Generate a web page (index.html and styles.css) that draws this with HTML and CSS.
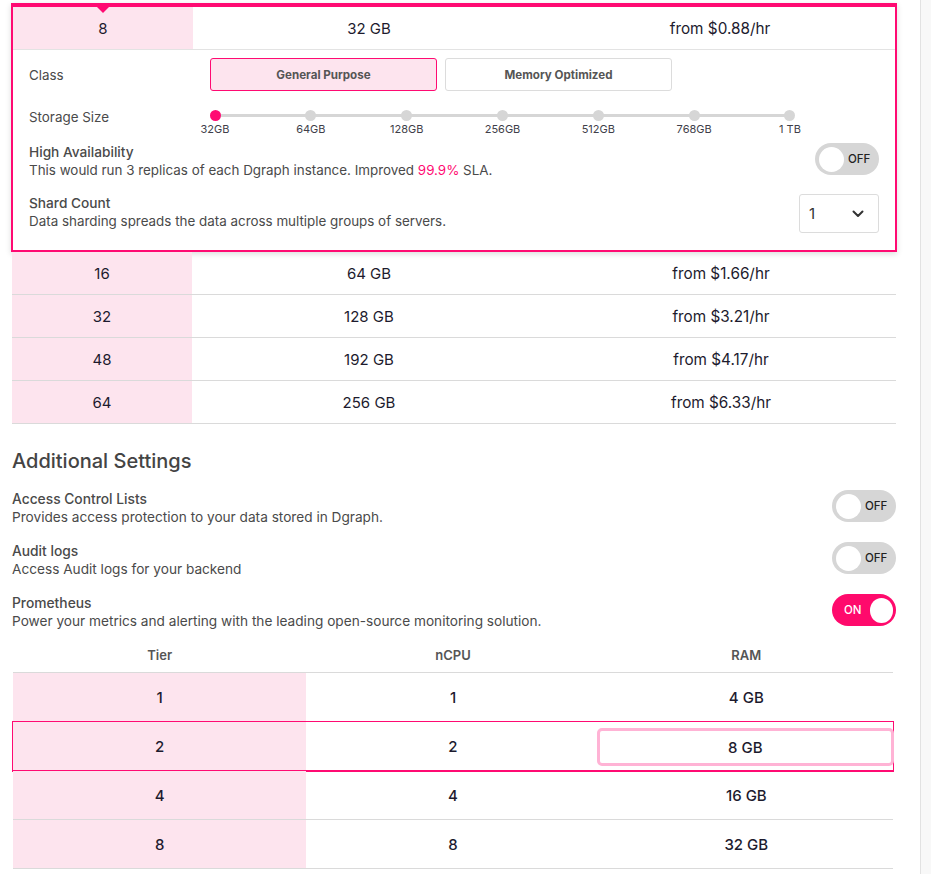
FILE: index.html
```html
<!DOCTYPE html>
<html>
<head>
<meta charset="utf-8">
<title>Dgraph backend config</title>
<link rel="stylesheet" href="styles.css">
</head>
<body>
<div class="page">
  <div class="content">
    <div class="card">
      <div class="card-row">
        <div class="cell pink"><span class="marker"></span>8</div>
        <div class="cell">32 GB</div>
        <div class="cell price">from $0.88/hr</div>
      </div>
      <div class="config">
        <div class="cfg-class">
          <div class="label">Class</div>
          <div class="btns">
            <button class="btn active">General Purpose</button>
            <button class="btn">Memory Optimized</button>
          </div>
        </div>
        <div class="cfg-storage">
          <div class="label">Storage Size</div>
          <div class="slider">
            <div class="stop on"><span class="dot"></span><span class="stop-l">32GB</span></div>
            <div class="stop"><span class="dot"></span><span class="stop-l">64GB</span></div>
            <div class="stop"><span class="dot"></span><span class="stop-l">128GB</span></div>
            <div class="stop"><span class="dot"></span><span class="stop-l">256GB</span></div>
            <div class="stop"><span class="dot"></span><span class="stop-l">512GB</span></div>
            <div class="stop"><span class="dot"></span><span class="stop-l">768GB</span></div>
            <div class="stop"><span class="dot"></span><span class="stop-l">1 TB</span></div>
          </div>
        </div>
        <div class="opt ha">
          <div class="opt-text">
            <div class="opt-title">High Availability</div>
            <div class="opt-desc">This would run 3 replicas of each Dgraph instance. Improved <span class="hl">99.9%</span> SLA.</div>
          </div>
          <div class="toggle"><span class="knob"></span><span class="tl">OFF</span></div>
        </div>
        <div class="opt shard">
          <div class="opt-text">
            <div class="opt-title">Shard Count</div>
            <div class="opt-desc">Data sharding spreads the data across multiple groups of servers.</div>
          </div>
          <div class="select"><span class="sel-v">1</span>
            <svg class="chev" width="12" height="8" viewBox="0 0 12 8"><path d="M1.5 1.5 L6 6 L10.5 1.5" fill="none" stroke="#333" stroke-width="2" stroke-linecap="round" stroke-linejoin="round"/></svg>
          </div>
        </div>
      </div>
    </div>

    <div class="trow"><div class="cell pink">16</div><div class="cell">64 GB</div><div class="cell price">from $1.66/hr</div></div>
    <div class="trow"><div class="cell pink">32</div><div class="cell">128 GB</div><div class="cell price">from $3.21/hr</div></div>
    <div class="trow"><div class="cell pink">48</div><div class="cell">192 GB</div><div class="cell price">from $4.17/hr</div></div>
    <div class="trow"><div class="cell pink">64</div><div class="cell">256 GB</div><div class="cell price">from $6.33/hr</div></div>

    <h2 class="heading">Additional Settings</h2>

    <div class="settings">
      <div class="opt">
        <div class="opt-text">
          <div class="opt-title">Access Control Lists</div>
          <div class="opt-desc">Provides access protection to your data stored in Dgraph.</div>
        </div>
        <div class="toggle"><span class="knob"></span><span class="tl">OFF</span></div>
      </div>
      <div class="opt">
        <div class="opt-text">
          <div class="opt-title">Audit logs</div>
          <div class="opt-desc">Access Audit logs for your backend</div>
        </div>
        <div class="toggle"><span class="knob"></span><span class="tl">OFF</span></div>
      </div>
      <div class="opt">
        <div class="opt-text">
          <div class="opt-title">Prometheus</div>
          <div class="opt-desc">Power your metrics and alerting with the leading open-source monitoring solution.</div>
        </div>
        <div class="toggle on"><span class="tl">ON</span><span class="knob"></span></div>
      </div>
    </div>

    <div class="tiers">
      <div class="thead"><div class="hcell">Tier</div><div class="hcell">nCPU</div><div class="hcell">RAM</div></div>
      <div class="tier-row"><div class="tcell pink">1</div><div class="tcell">1</div><div class="tcell">4 GB</div></div>
      <div class="tier-row selected"><div class="tcell pink">2</div><div class="tcell">2</div><div class="tcell"><div class="focus">8 GB</div></div></div>
      <div class="tier-row"><div class="tcell pink">4</div><div class="tcell">4</div><div class="tcell">16 GB</div></div>
      <div class="tier-row"><div class="tcell pink">8</div><div class="tcell">8</div><div class="tcell">32 GB</div></div>
    </div>
  </div>
</div>
</body>
</html>
```

FILE: styles.css
```css
* { box-sizing: border-box; }

html, body {
  margin: 0;
  padding: 0;
}

body {
  background: #f8f8f8;
  font-family: Inter, "Noto Sans", "Liberation Sans", sans-serif;
  color: #1d1b2e;
}

.page {
  width: 921px;
  min-height: 874px;
  background: #fff;
  border-right: 1px solid #e2e2e2;
  padding-top: 3px;
}

.content {
  margin-left: 12px;
  width: 884px;
}

/* selected card */
.card {
  margin-left: -1px;
  width: 886px;
  border: 2px solid #ff0a72;
  border-top-width: 4px;
  background: #fff;
  box-shadow: 0 2px 6px rgba(0, 0, 0, 0.14);
}

.card-row {
  display: grid;
  grid-template-columns: 180px 352px 1fr;
  height: 43px;
  border-bottom: 1px solid #e3e3e3;
}

.cell {
  display: flex;
  align-items: center;
  justify-content: center;
  font-size: 15px;
  color: #1d1b2e;
  position: relative;
}

.price { font-size: 15.3px; }

.pink { background: #fde4ee; }

.marker {
  position: absolute;
  top: 0;
  left: 84px;
  width: 0;
  height: 0;
  border-left: 6px solid transparent;
  border-right: 6px solid transparent;
  border-top: 6px solid #ff0a72;
}

.config {
  padding: 8px 16px 17px 16px;
}

.label {
  width: 181px;
  font-size: 13.4px;
  color: #4a4a4a;
  line-height: 24px;
}

.cfg-class {
  display: flex;
  align-items: center;
  height: 33px;
}

.btns {
  display: flex;
  gap: 8px;
}

.btn {
  width: 227px;
  height: 33px;
  border: 1px solid #dcdcdc;
  border-radius: 3px;
  background: #fff;
  font-family: Inter, "Noto Sans", sans-serif;
  font-weight: 700;
  font-size: 11.6px;
  color: #555;
  padding: 0;
}

.btn.active {
  background: #fde4ee;
  border-color: #ff0a72;
}

.cfg-storage {
  display: flex;
  align-items: flex-start;
  margin-top: 14px;
  height: 31px;
}

.slider {
  position: relative;
  margin-left: -15px;
  width: 615px;
  display: flex;
  justify-content: space-between;
  padding-top: 5px;
}

.slider::before {
  content: "";
  position: absolute;
  left: 20px;
  right: 20px;
  top: 9px;
  height: 3px;
  background: #d6d6d6;
}

.stop {
  width: 40px;
  display: flex;
  flex-direction: column;
  align-items: center;
  position: relative;
}

.dot {
  width: 11px;
  height: 11px;
  border-radius: 50%;
  background: #d6d6d6;
}

.stop.on .dot { background: #ff0a72; }

.stop-l {
  margin-top: 1px;
  font-size: 11px;
  line-height: 14px;
  color: #3f3f4a;
  white-space: nowrap;
}

.opt {
  display: flex;
  justify-content: space-between;
  align-items: flex-start;
}

.ha { margin-top: 7px; }
.shard { margin-top: 15px; }

.opt-title {
  font-size: 13.7px;
  line-height: 18px;
  font-weight: 500;
  color: #4a4a4a;
}

.opt-desc {
  font-size: 13.4px;
  line-height: 18px;
  color: #4a4a4a;
}

.settings .opt-title { font-size: 13.8px; }
.settings .opt-desc { font-size: 13.65px; }

.hl { color: #ff0a72; }

.toggle {
  width: 64px;
  height: 32px;
  border-radius: 16px;
  background: #d6d6d6;
  display: flex;
  align-items: center;
  padding: 0 4px;
  gap: 4px;
  flex-shrink: 0;
}

.knob {
  width: 25px;
  height: 25px;
  border-radius: 50%;
  background: #fff;
}

.tl {
  font-size: 11.5px;
  font-weight: 500;
  color: #222;
}

.toggle.on {
  background: #ff0a6c;
  padding: 0 3px 0 12px;
  gap: 8px;
}

.toggle.on .tl { color: #fff; }

.select {
  width: 80px;
  height: 39px;
  border: 1px solid #dcdcdc;
  border-radius: 3px;
  display: flex;
  align-items: center;
  justify-content: space-between;
  padding: 0 14px 0 9px;
  flex-shrink: 0;
}

.sel-v {
  font-size: 15px;
  color: #333;
}

/* rows below */
.trow {
  display: grid;
  grid-template-columns: 180px 354px 1fr;
  height: 43px;
  border-bottom: 1px solid #dadada;
}

.heading {
  margin: 23px 0 0 0;
  font-size: 20px;
  line-height: 28px;
  font-weight: 500;
  color: #444;
}

.settings {
  margin-top: 15px;
  display: flex;
  flex-direction: column;
  gap: 16px;
}

.settings .opt { height: 36px; }

/* tiers table */
.tiers {
  margin-top: 8px;
  margin-left: 1px;
  width: 880px;
}

.thead {
  display: grid;
  grid-template-columns: repeat(3, 1fr);
  height: 35px;
  padding-bottom: 1px;
  border-bottom: 1px solid #dadada;
}

.hcell {
  display: flex;
  align-items: center;
  justify-content: center;
  font-size: 13px;
  font-weight: 600;
  color: #555;
}

.tier-row {
  display: grid;
  grid-template-columns: repeat(3, 1fr);
  height: 49px;
  border-bottom: 1px solid #dadada;
}

.tier-row.selected {
  border-bottom-color: #ff0a72;
  box-shadow: 0 0 0 1px #ff0a72;
}

.tcell {
  display: flex;
  align-items: center;
  justify-content: center;
  font-size: 15px;
  font-weight: 500;
  color: #1d1b2e;
}

.focus {
  align-self: stretch;
  flex: 1;
  margin: 6px -1px 4px -3px;
  border: 3px solid #ffb3d5;
  border-radius: 5px;
  display: flex;
  align-items: center;
  justify-content: center;
}
```
